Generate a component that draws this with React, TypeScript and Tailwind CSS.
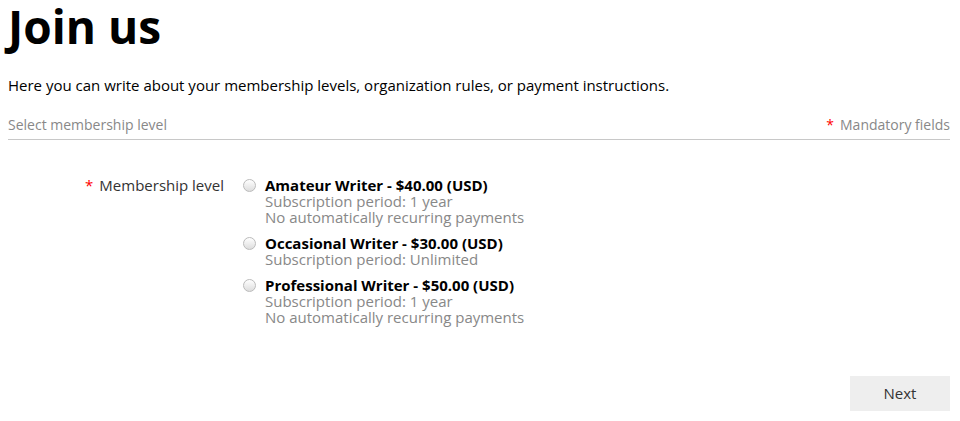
const levels = [
  { title: "Amateur Writer - $40.00 (USD)", lines: ["Subscription period: 1 year", "No automatically recurring payments"] },
  { title: "Occasional Writer - $30.00 (USD)", lines: ["Subscription period: Unlimited"] },
  { title: "Professional Writer - $50.00 (USD)", lines: ["Subscription period: 1 year", "No automatically recurring payments"] },
];

export default function App() {
  return (
    <div className="w-[960px] h-[421px] overflow-hidden bg-white pl-2 pr-[10px] text-[#000] font-['Open_Sans',sans-serif]">
      <h1 className="text-[46px] font-bold leading-[48px] mt-[2px]">Join us</h1>
      <p className="text-[15px] leading-5 mt-[25px]">
        Here you can write about your membership levels, organization rules, or payment instructions.
      </p>

      {/* Section header */}
      <div className="mt-[19px] flex items-center justify-between border-b border-[#c8c8c8] pb-[4px] text-[14px] text-[#888]">
        <span>Select membership level</span>
        <span>
          <span className="text-[#f00] mr-[6px]">*</span>Mandatory fields
        </span>
      </div>

      <div className="mt-[37px] flex">
        <div className="w-[216px] text-right text-[15px] leading-4 text-[#333]">
          <span className="text-[#f00] mr-[6px]">*</span>Membership level
        </div>
        <div className="ml-[19px] flex flex-col gap-[10px]">
          {levels.map((l) => (
            <label key={l.title} className="flex items-start gap-[9px]">
              <span className="mt-[2px] block h-[13px] w-[13px] rounded-full border border-[#bbb] bg-gradient-to-b from-[#fff] to-[#ddd]" />
              <span className="flex flex-col text-[15px] leading-4">
                <span className="font-bold text-[#000]">{l.title}</span>
                {l.lines.map((t) => (
                  <span key={t} className="text-[#888]">{t}</span>
                ))}
              </span>
            </label>
          ))}
        </div>
      </div>

      <div className="mt-[51px] flex justify-end">
        <button className="h-[35px] w-[100px] bg-[#eee] text-[15px] text-[#333]">Next</button>
      </div>
    </div>
  );
}
